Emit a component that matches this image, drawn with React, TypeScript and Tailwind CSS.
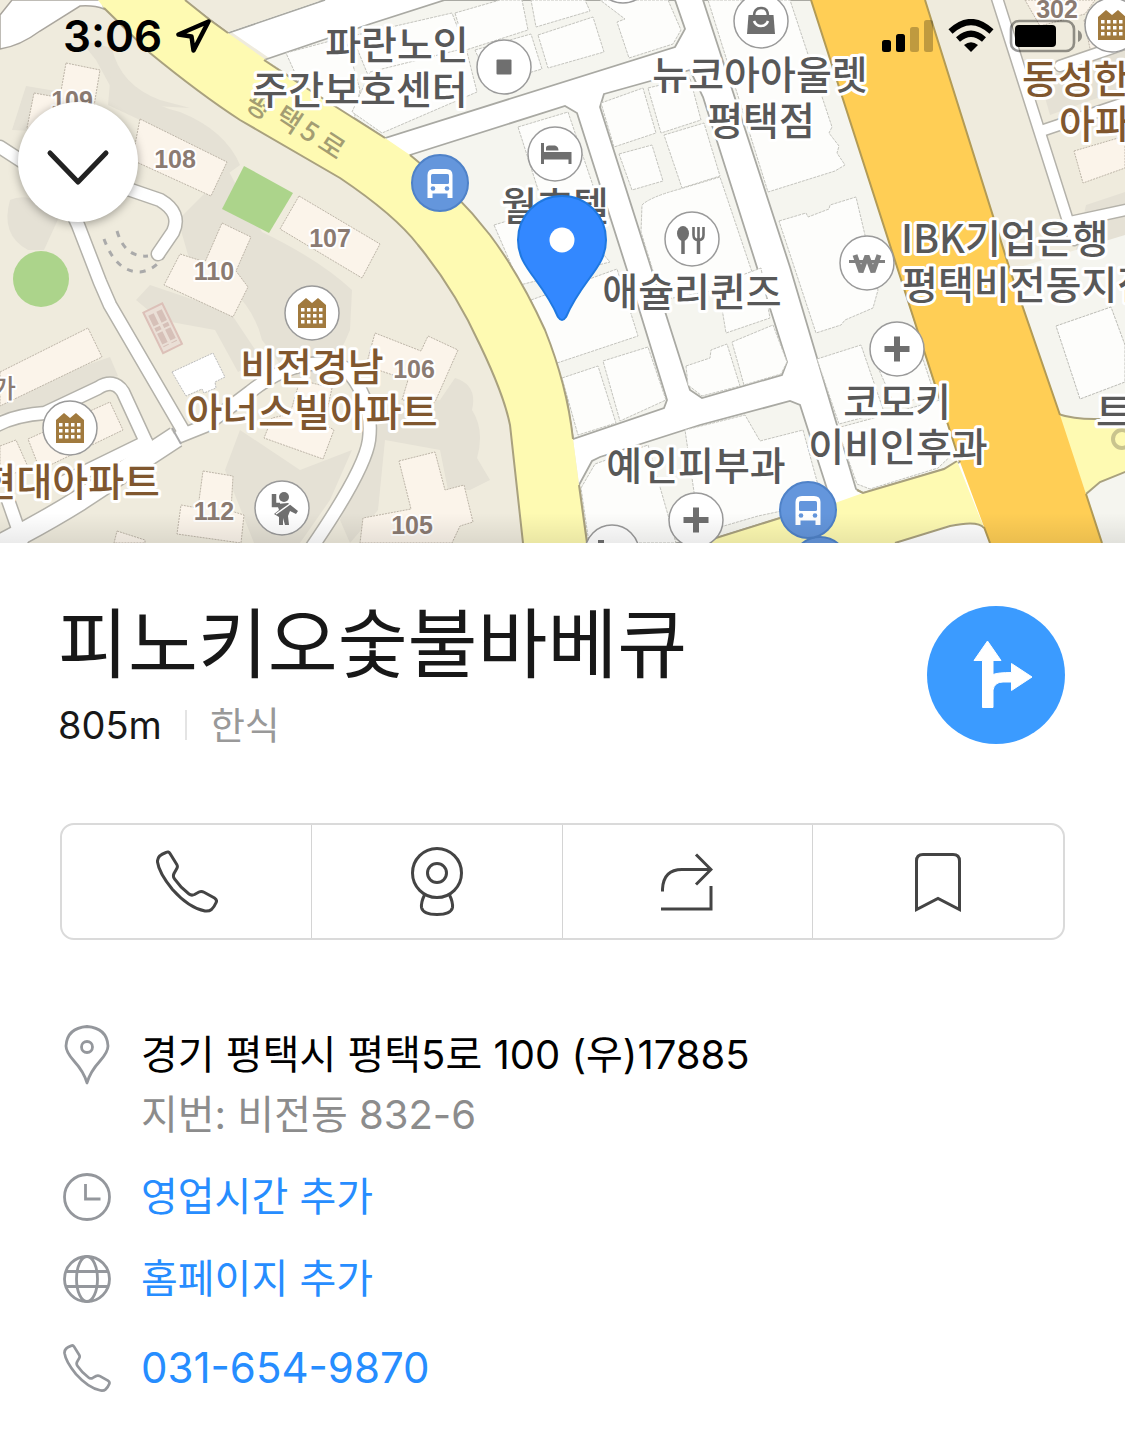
import type { ReactNode } from "react";

type Label = { text: string; x: number; y: number; anchor?: "start" | "middle" | "end"; brown?: boolean };

const placeLabels: Label[] = [
  { text: "파란노인", x: 397, y: 59 },
  { text: "주간보호센터", x: 360, y: 104 },
  { text: "뉴코아아울렛", x: 760, y: 89 },
  { text: "평택점", x: 761, y: 135 },
  { text: "월호텔", x: 555, y: 220 },
  { text: "애슐리퀸즈", x: 692, y: 306 },
  { text: "IBK기업은행", x: 901, y: 253, anchor: "start" },
  { text: "평택비전동지점", x: 902, y: 299, anchor: "start" },
  { text: "코모키", x: 897, y: 416 },
  { text: "이비인후과", x: 898, y: 461 },
  { text: "예인피부과", x: 696, y: 480 },
  { text: "트", x: 1096, y: 426, anchor: "start" },
  { text: "동성한", x: 1022, y: 93, anchor: "start", brown: true },
  { text: "아파", x: 1059, y: 138, anchor: "start", brown: true },
  { text: "비전경남", x: 312, y: 381, brown: true },
  { text: "아너스빌아파트", x: 312, y: 426, brown: true },
  { text: "현대아파트", x: 160, y: 496, anchor: "end", brown: true },
];

const buildingNumbers = [
  { text: "109", x: 72, y: 109 },
  { text: "108", x: 175, y: 168 },
  { text: "107", x: 330, y: 247 },
  { text: "110", x: 214, y: 280 },
  { text: "106", x: 414, y: 378 },
  { text: "112", x: 214, y: 520 },
  { text: "105", x: 412, y: 534 },
  { text: "302", x: 1057, y: 18 },
];

const roadName = [
  { text: "평", x: 260, y: 104, angle: 33 },
  { text: "택", x: 290, y: 118, angle: 33 },
  { text: "5", x: 311, y: 130, angle: 33 },
  { text: "로", x: 333, y: 144, angle: 33 },
];

// darker ground inside the apartment complexes
const groundShades = [
  "M80 40 L112 48 Q120 85 160 100 L190 108 L120 104 L96 60Z",
  "M112 60 Q130 100 180 112 Q225 130 240 165 L222 178 Q190 140 140 120 L108 105Z",
  "M26 86 L62 92 L58 110 L120 120 L118 135 L12 130Z",
  "M10 200 Q30 190 60 215 L44 250 H28 Q0 235 10 200Z",
  "M228 170 L262 232 Q320 260 352 290 L350 330 Q330 380 300 390 L262 340 Q250 290 190 262 L178 220Z",
  "M150 285 L230 312 L262 360 L238 372 L215 330 L160 320 L136 300Z",
  "M240 430 L300 470 L352 450 L330 500 L300 543 L254 543 L225 470Z",
  "M455 378 Q478 385 472 410 Q485 430 477 458 L490 480 L470 490 L448 490 L440 450 L385 440 L378 510 L350 543 L340 520 L385 405 L440 400Z",
  "M0 395 L110 357 L118 376 L40 408 L0 414Z",
  "M1040 80 L1125 45 V88 L1050 115Z",
  "M1086 205 L1125 192 V240 L1076 250Z",
];

const apartments = [
  "M66 63 L100 70 L93 112 L58 108Z",
  "M34 93 L62 98 L52 135 L27 128Z",
  "M140 119 L227 162 L211 196 L132 160Z",
  "M299 196 L380 244 L362 278 L280 229Z",
  "M222 223 L251 237 L236 271 L248 287 L233 317 L164 285 L180 254 L205 262Z",
  "M375 333 L421 351 L428 336 L458 350 L435 402 L402 400 L408 380 L366 366Z",
  "M300 380 L332 388 L324 424 L334 430 L323 459 L264 438 L272 418 L290 414Z",
  "M399 461 L435 452 L445 490 L464 485 L473 522 L460 526 L452 543 L360 543 L363 518 L411 509Z",
  "M203 471 L233 476 L231 511 L244 515 L241 543 L177 534 L181 505 L198 508Z",
  "M0 372 L88 328 L102 357 L0 406Z",
  "M28 439 L110 402 L123 430 L40 470Z",
  "M0 446 L16 440 L28 467 L0 480Z",
  "M117 531 L145 540 V543 H114Z",
  "M1025 0 H1095 L1085 14 L1040 26Z",
  "M1074 151 L1125 136 V168 L1083 183Z",
  "M1084 20 L1125 10 V50 L1092 58Z",
];

// city blocks between the side streets
const blocks = [
  "M185 0 H325 L228 33Z",
  "M264 60 L370 24 L445 0 H675 L685 29 L675 47 L385 138 Z",
  "M410 155 L565 106 L577 113 L627 270 L667 400 L664 408 L573 439 L567 400 L545 330 L508 265 L460 202Z",
  "M604 94 L690 70 L703 97 L787 362 L782 375 L702 398 L690 390 L600 107Z",
  "M703 0 H812 L960 462 L944 469 L863 493 L856 489 L790 267Z",
  "M579 485 L592 461 L600 457 L700 425 L790 401 L800 405 L828 492 L780 518 L700 543 H587Z",
];

const parcels = [
  "M286 53 L345 37 L360 90 L352 130 L300 84Z",
  "M352 36 L452 13 L467 52 L370 80Z",
  "M455 13 L500 0 H522 L528 30 L466 50Z",
  "M531 0 H585 L590 11 L536 27Z",
  "M538 35 L593 17 L604 52 L548 68Z",
  "M475 50 L531 34 L542 69 L490 84Z",
  "M600 0 H668 L681 30 L673 44 L629 58 L617 22 L625 19Z",
  "M370 72 L466 48 L477 92 L382 133 L352 112Z",
  "M518 127 L568 112 L603 215 L551 230Z",
  "M494 225 L560 205 L610 262 L520 285Z",
  "M531 300 L617 269 L638 336 L557 363Z",
  "M562 378 L598 366 L616 423 L578 435Z",
  "M603 361 L648 347 L666 400 L620 421Z",
  "M601 103 L643 88 L656 133 L614 147Z",
  "M648 88 L690 78 L701 120 L661 133Z",
  "M619 154 L652 145 L663 181 L632 190Z",
  "M664 135 L704 123 L720 176 L682 188Z",
  "M642 205 Q650 197 680 189 L720 177 L752 272 L744 285 L662 300 L641 232Z",
  "M718 284 L761 268 L770 318 L726 333Z",
  "M686 366 L710 358 L711 350 L727 344 L740 386 L702 396 L688 385Z",
  "M732 342 L773 325 L787 362 L781 374 L744 385Z",
  "M720 0 H790 L832 127 L829 133 L839 146 L837 153 L845 165 L835 171 L768 192 L708 0Z",
  "M779 221 L806 213 L808 217 L829 209 L830 205 L856 197 L878 290 L873 308 L845 320 L841 325 L816 333Z",
  "M817 359 L861 345 L884 412 L839 424Z",
  "M876 363 L920 350 L934 393 L895 406Z",
  "M837 428 L896 412 L940 400 L957 450 L938 468 L870 489 L857 484Z",
  "M581 488 L595 464 L648 445 L676 543 H589Z",
  "M685 430 L745 415 L760 441 L803 430 L818 485 L810 505 L758 516 L700 533Z",
];

function RoundMarker({ x, y, children }: { x: number; y: number; children?: ReactNode }) {
  return (
    <g transform={`translate(${x} ${y})`}>
      <circle r="27" fill="#fff" stroke="#9a9a9a" strokeWidth="1.5" />
      {children}
    </g>
  );
}

function ApartmentMarker({ x, y }: { x: number; y: number }) {
  return (
    <RoundMarker x={x} y={y}>
      <path d="M-14 -8 L-6 -15 L0 -10 L6 -15 L14 -8 V15 H-14Z" fill="#a17a3e" />
      {[-5, 1, 7].map((wy) =>
        [-11, -5, 1, 7].map((wx) => <rect key={`${wx}${wy}`} x={wx} y={wy} width="3.5" height="3.5" fill="#fff" />)
      )}
    </RoundMarker>
  );
}

function HospitalMarker({ x, y }: { x: number; y: number }) {
  return (
    <RoundMarker x={x} y={y}>
      <path d="M-3 -12.5 H3 V-3 H12.5 V3 H3 V12.5 H-3 V3 H-12.5 V-3 H-3Z" fill="#6f6f6f" />
    </RoundMarker>
  );
}

function BusStop({ x, y }: { x: number; y: number }) {
  return (
    <g transform={`translate(${x} ${y})`}>
      <circle r="28" fill="#6496dc" stroke="#4f82c8" strokeWidth="2" />
      <path d="M-12.5 -8 Q-12.5 -14 -6 -14 H6 Q12.5 -14 12.5 -8 V15 H7.5 V10.5 H-7.5 V15 H-12.5Z" fill="#fff" />
      <rect x="-9" y="-9" width="18" height="10" rx="1.5" fill="#6496dc" />
      <circle cx="-7" cy="5.5" r="2.3" fill="#6496dc" />
      <circle cx="7" cy="5.5" r="2.3" fill="#6496dc" />
    </g>
  );
}

function MapView() {
  const complexRoads = [
    "M0 147 L60 186 L78 225 L100 282 L110 305 L184 432",
    "M125 188 L160 200 Q182 213 173 232 L158 254",
    "M-5 426 Q15 415 45 413 L98 388 Q114 378 123 392 L146 442",
    "M60 484 L146 442",
    "M180 436 L205 426 L250 392 Q300 352 345 368 Q374 400 369 440 Q365 470 310 550",
    "M8 500 L22 540",
  ];
  const eastRoads = ["M996 -5 L1074 240", "M1044 130 L1130 101", "M1060 66 L1130 42", "M1070 222 L1130 209"];

  return (
    <svg viewBox="0 0 1125 543" className="block w-full" role="img" aria-label="지도">
      <defs>
        <linearGradient id="sheetShade" x1="0" y1="0" x2="0" y2="1">
          <stop offset="0" stopColor="#000" stopOpacity="0" />
          <stop offset="1" stopColor="#000" stopOpacity="0.08" />
        </linearGradient>
      </defs>
      <rect width="1125" height="543" fill="#efebdd" />

      <g fill="#e5e1d5">
        {groundShades.map((d) => (
          <path key={d} d={d} />
        ))}
      </g>
      <g fill="#fbf4ea" stroke="#bdb5a8" strokeWidth="1" strokeDasharray="2 1">
        {apartments.map((d) => (
          <path key={d} d={d} />
        ))}
      </g>

      <path d="M172 372 L213 353 L225 377 L215 382 L216 388 L204 393 L202 389 L186 396Z" fill="#fff" stroke="#bbb" strokeDasharray="2 1" />
      <g transform="rotate(-26 162 328)">
        <rect x="152" y="306" width="21" height="45" fill="#eadfd6" stroke="#dcc0b8" strokeWidth="2" />
        <path d="M158 311 V346 M167 311 V346" stroke="#d6c0b8" strokeWidth="6" strokeDasharray="12 2 4 2" />
      </g>
      <path d="M104 239 Q116 272 140 272 Q155 270 164 256" fill="none" stroke="#aaa" strokeWidth="3" strokeDasharray="6 7" />
      <path d="M117 231 Q125 258 148 256" fill="none" stroke="#aaa" strokeWidth="3" strokeDasharray="6 7" />
      <circle cx="41" cy="279" r="28" fill="#acd48b" />
      <path d="M244 166 L293 193 L269 233 L222 209Z" fill="#acd48b" />

      <g fill="none" stroke="#b4b2aa" strokeWidth="15" strokeLinecap="round" strokeLinejoin="round">
        {complexRoads.map((d) => (
          <path key={d} d={d} />
        ))}
        {eastRoads.map((d) => (
          <path key={d} d={d} strokeWidth="13" />
        ))}
        <path d="M176 437 L80 500 Q40 525 -10 550" strokeWidth="23" strokeLinecap="butt" />
      </g>
      <g fill="none" stroke="#fff" strokeWidth="12" strokeLinecap="round" strokeLinejoin="round">
        {complexRoads.map((d) => (
          <path key={d} d={d} />
        ))}
        {eastRoads.map((d) => (
          <path key={d} d={d} strokeWidth="10" />
        ))}
        <path d="M176 437 L80 500 Q40 525 -10 550" strokeWidth="20" strokeLinecap="butt" />
      </g>
      <path d="M172 428 L181 444" stroke="#aaa" strokeWidth="2" />

      <path d="M12 0 H102 L104 9 Q94 5 80 6 L40 31 Q20 46 0 49 V15Z" fill="#fff" stroke="#aaa69e" strokeWidth="1.5" />

      {/* downtown grid */}
      <path d="M185 0 H812 L990 543 H587 L573 439 L508 265 L385 138Z" fill="#fff" />
      <g fill="#f5f5ef" stroke="#a9a9a3" strokeWidth="1.8">
        {blocks.map((d) => (
          <path key={d} d={d} />
        ))}
      </g>
      <g fill="#fdfdfb" stroke="#c4c4be" strokeWidth="1" strokeDasharray="3 1">
        {parcels.map((d) => (
          <path key={d} d={d} />
        ))}
      </g>
      <path d="M185 0 H322 L228 32Z" fill="#efebdd" />

      <path d="M1010 270 L1125 235 V543 H1100Z" fill="#f5f5ef" />
      <path d="M1056 326 L1111 307 L1125 345 V382 L1080 399Z" fill="#fdfdfb" stroke="#bcbcb6" strokeDasharray="3 1" />

      {/* main roads */}
      <path
        d="M98 0 L104 8 L150 53 Q200 94 240 120 L340 178 Q395 215 418 245 Q455 290 480 345 Q504 395 510 425 Q516 480 523 543 H587 L579 485 L573 439 Q567 385 545 330 Q520 275 490 235 Q455 190 410 155 L385 138 L300 84 L228 33 L210 20 L185 0Z"
        fill="#fefab2"
      />
      <path
        d="M104 8 L150 53 Q200 94 240 120 L340 178 Q395 215 418 245 Q455 290 480 345 Q504 395 510 425 Q516 480 523 543"
        fill="none"
        stroke="#a9a17e"
        strokeWidth="2"
      />
      <path
        d="M185 0 L210 20 L228 33 M264 60 L300 84 L385 138 M410 155 Q455 190 490 235 Q520 275 545 330 Q567 385 573 439 M579 485 L587 543"
        fill="none"
        stroke="#a9a17e"
        strokeWidth="2"
      />
      <path d="M700 543 L780 518 L835 503 L863 493 L944 469 L957 461 L985 530 Q978 520 950 525 L895 543Z" fill="#fefab2" />
      <path d="M700 543 L780 518 M857 490 L863 493 L944 469 L957 461 M895 543 L950 526 Q978 520 984 528" fill="none" stroke="#a9a17e" strokeWidth="2" />
      <path d="M1058 414 Q1085 423 1130 416 V470 L1100 482 L1086 494Z" fill="#fefab2" />
      <path d="M1058 414 Q1085 423 1130 416 M1130 470 L1100 482 L1086 494" fill="none" stroke="#a9a17e" strokeWidth="2" />
      <path d="M811 0 H925 L1010 270 L1060 415 L1086 494 L1102 543 H990 L960 462 L898 270Z" fill="#ffce55" />
      <path d="M811 0 L898 270 L960 462 M984 527 L990 543 M925 0 L1010 270 L1060 415 M1086 494 L1102 543" fill="none" stroke="#b39b55" strokeWidth="2" />

      {roadName.map((c) => (
        <text
          key={c.text}
          transform={`translate(${c.x} ${c.y}) rotate(${c.angle})`}
          textAnchor="middle"
          dominantBaseline="central"
          fontSize="27"
          fontWeight="500"
          fill="#a39d72"
          className="font-['Noto_Sans_CJK_KR',sans-serif]"
        >
          {c.text}
        </text>
      ))}

      <g textAnchor="middle" fill="#8b7b72" stroke="#fff" strokeWidth="4" strokeLinejoin="round" paintOrder="stroke" className="font-['Liberation_Sans','Noto_Sans_CJK_KR',sans-serif]">
        {buildingNumbers.map((n) => (
          <text key={n.text} x={n.x} y={n.y} fontSize="25" fontWeight="700">
            {n.text}
          </text>
        ))}
        <text x="4" y="398" fontSize="26" fontWeight="500">
          가
        </text>
      </g>
      <circle cx="1122" cy="439" r="9" fill="none" stroke="#c9c48e" strokeWidth="4" />

      <g fontSize="39" fontWeight="500" stroke="#fff" strokeWidth="6" strokeLinejoin="round" paintOrder="stroke" className="font-['Noto_Sans_CJK_KR',sans-serif]">
        {placeLabels.map((l) => (
          <text key={l.text} x={l.x} y={l.y} textAnchor={l.anchor ?? "middle"} fill={l.brown ? "#80572f" : "#585858"}>
            {l.text}
          </text>
        ))}
      </g>

      <RoundMarker x={504} y={67}>
        <rect x="-7.5" y="-7.5" width="15" height="15" rx="1" fill="#6f6f6f" />
      </RoundMarker>
      <RoundMarker x={623} y={-24} />
      <RoundMarker x={555} y={154}>
        <path d="M-14 -11 H-11 V-2 H16.5 V10 H13.5 V5.5 H-11 V10 H-14Z M-9 -3.5 V-6 Q-9 -8.500 -6 -8.500 H0 Q3.5 -7.5 3.5 -3.5Z" fill="#6f6f6f" />
      </RoundMarker>
      <RoundMarker x={692} y={239}>
        <ellipse cx="-9" cy="-5.5" rx="6" ry="7.5" fill="#6f6f6f" />
        <path d="M-9 0 V15 M6.5 0 V15" stroke="#6f6f6f" strokeWidth="3.5" />
        <path d="M1.5 -12 V-4 Q1.5 1 6.5 1 Q11.5 1 11.5 -4 V-12 M6.5 -12 V0" fill="none" stroke="#6f6f6f" strokeWidth="2.6" />
      </RoundMarker>
      <RoundMarker x={867} y={263}>
        <path d="M-12 -8 L-6 9 L0 -7 L6 9 L12 -8" fill="none" stroke="#808080" strokeWidth="5" strokeLinejoin="bevel" />
        <path d="M-18 -1.500 H18" stroke="#808080" strokeWidth="3" />
      </RoundMarker>
      <RoundMarker x={761} y={21}>
        <path d="M-12.5 -6 H12.5 L14 13 H-14Z" fill="#6f6f6f" />
        <path d="M-7 -5 Q-7 -13 0 -13 Q7 -13 7 -5" fill="none" stroke="#6f6f6f" strokeWidth="2.6" />
        <path d="M-7 0 Q-5 5 0 5 Q5 5 7 0" fill="none" stroke="#fff" strokeWidth="2.6" />
      </RoundMarker>
      <HospitalMarker x={897} y={349} />
      <HospitalMarker x={696} y={520} />
      <RoundMarker x={612} y={552}>
        <path d="M-14 -12 H-8 V-3 H-14Z" fill="#6f6f6f" />
      </RoundMarker>
      <ApartmentMarker x={312} y={313} />
      <ApartmentMarker x={70} y={428} />
      <ApartmentMarker x={1112} y={25} />
      <RoundMarker x={282} y={508}>
        <circle cx="2" cy="-11" r="5" fill="#6f6f6f" />
        <path d="M-8 -14 V-3 H-2" fill="none" stroke="#6f6f6f" strokeWidth="4.5" />
        <path d="M-5 -4 L6 -5 L16 3 L14 6 L8 3 L6 8 L7 17 H3 L1 10 L1 17 H-3 L-3 9 L-8 6 L-3 2Z" fill="#6f6f6f" />
        <path d="M-6 6 L8 -4" stroke="#fff" strokeWidth="1.5" />
      </RoundMarker>
      <BusStop x={440} y={183} />
      <BusStop x={820} y={565} />
      <BusStop x={808} y={510} />

      <path
        d="M562 196 C587 196 606 216 606 240 C606 268 583 278 566 317 Q562 323 558 317 C541 278 518 268 518 240 C518 216 537 196 562 196Z"
        fill="#3388ff"
        stroke="#1f78e0"
        strokeWidth="2"
      />
      <circle cx="562" cy="240" r="12.5" fill="#fff" />

      <rect y="513" width="1125" height="30" fill="url(#sheetShade)" />
    </svg>
  );
}

function StatusBar() {
  return (
    <div className="absolute inset-x-0 top-0 flex items-center justify-between pt-3 pr-[42px] pl-[63px] text-black">
      <div className="flex items-center gap-[14px]">
        <span className="text-[44px] leading-[48px] font-semibold">3:06</span>
        <svg width="36" height="36" viewBox="0 0 36 36" fill="none" stroke="currentColor" strokeWidth="4.5" strokeLinejoin="round">
          <path d="M32.5 3.5 L2.5 16.5 L15.5 18.5 L17.5 32.5Z" />
        </svg>
      </div>
      <div className="flex items-center gap-[15px]">
        <svg width="51" height="34" viewBox="0 0 51 34" fill="currentColor">
          <rect x="0" y="21" width="9" height="12" rx="2.5" />
          <rect x="14" y="15" width="9" height="18" rx="2.5" />
          <rect x="28" y="8" width="9" height="25" rx="2.5" opacity="0.25" />
          <rect x="42" y="1" width="9" height="32" rx="2.5" opacity="0.25" />
        </svg>
        <svg width="46" height="34" viewBox="0 0 46 34" fill="none" stroke="currentColor" strokeWidth="6">
          <path d="M2.5 12.5 Q23 -6.5 43.5 12.5" />
          <path d="M10 20.5 Q23 9 36 20.5" />
          <path d="M23 33 L16 26 Q23 20.5 30 26Z" fill="currentColor" stroke="none" />
        </svg>
        <svg width="74" height="34" viewBox="0 0 74 34">
          <rect x="2" y="2" width="63" height="30" rx="8" fill="none" stroke="#000" strokeOpacity="0.4" strokeWidth="2.6" />
          <rect x="6" y="6" width="41" height="22" rx="4" />
          <path d="M69 11 Q73 13 73 17 Q73 21 69 23Z" opacity="0.4" />
        </svg>
      </div>
    </div>
  );
}

const handset =
  "M10 2.5 Q12.5 1 14 3.5 L20.8 14.5 Q22 16.5 20.8 18.5 L18 23.5 Q16.6 26.5 18.5 28.8 Q24.5 37.5 33 44 Q35.5 46 38.5 44.5 L43 42 Q45.5 40.8 48 42.2 L58.5 48 Q61.5 50 60 52.8 Q58.5 56.5 55.5 59.5 Q53 61.5 49 61 Q33 58 16.5 39.5 Q3 23 1.5 12 Q1 5.5 10 2.5Z";

const actions = [
  {
    label: "전화",
    icon: (
      <svg width="62" height="63" viewBox="0 0 62 63">
        <path d={handset} />
      </svg>
    ),
  },
  {
    label: "로드뷰",
    icon: (
      <svg width="52" height="70" viewBox="0 0 52 70">
        <circle cx="26" cy="26" r="24.5" />
        <circle cx="26" cy="26" r="9.5" />
        <path d="M13.5 48 Q10 55 10.5 60.5 Q12 67.5 26 67.5 Q40 67.5 41.5 60.5 Q42 55 38.5 48" />
      </svg>
    ),
  },
  {
    label: "공유",
    icon: (
      <svg width="52" height="58" viewBox="0 0 52 58">
        <path d="M1.5 38.5 V36 Q2.5 16.5 21 16.5 H49" />
        <path d="M35 1.5 L50 16.5 L35 31.5" />
        <path d="M0 56 H50 V33" />
      </svg>
    ),
  },
  {
    label: "저장",
    icon: (
      <svg width="50" height="60" viewBox="0 0 50 60">
        <path d="M3.5 57.5 V9 Q3.5 2.5 10 2.5 H40 Q46.5 2.5 46.5 9 V57.5 L25 46.5Z" />
      </svg>
    ),
  },
];

function InfoRow({ icon, children }: { icon: ReactNode; children: ReactNode }) {
  return (
    <li className="flex items-start gap-[27px]">
      <span className="flex h-[60px] w-[54px] shrink-0 items-center justify-center text-[#94979c]">{icon}</span>
      <div className="text-[40px] leading-[60px]">{children}</div>
    </li>
  );
}

export default function App() {
  return (
    <main className="min-h-screen bg-white font-['Inter','Noto_Sans_CJK_KR',sans-serif] text-[#181818]">
      <header className="relative">
        <MapView />
        <StatusBar />
        <button
          aria-label="닫기"
          className="absolute top-[102px] left-[18px] flex size-[120px] items-center justify-center rounded-full bg-white shadow-[0_2px_10px_rgba(0,0,0,0.35)]"
        >
          <svg width="64" height="40" viewBox="0 0 64 40" fill="none" stroke="#222" strokeWidth="5" strokeLinecap="round" strokeLinejoin="round" className="mt-3">
            <path d="M4 5 L32 34 L60 5" />
          </svg>
        </button>
      </header>

      <section className="px-[60px] pt-[63px]">
        <div className="flex items-start justify-between">
          <div className="-ml-[2px]">
            <h1 className="text-[76px] leading-[76px]">피노키오숯불바베큐</h1>
            <p className="mt-3 flex items-center text-[38px] leading-[62px]">
              <span>805m</span>
              <span className="mx-[23px] h-[30px] w-[2px] bg-[#e4e4e4]" />
              <span className="text-[#999]">한식</span>
            </p>
          </div>
          <button aria-label="길찾기" className="size-[138px] shrink-0 rounded-full bg-[#3b9bff]">
            <svg viewBox="0 0 138 138" fill="#fff" stroke="#fff" strokeLinejoin="round">
              <path d="M60.5 35 L74 54.5 H66 V68.5 Q71 66.5 84.5 66.5 V57.5 L105 71 L84.5 84.5 V76 H76 Q67.5 76 66 84 V101.5 H55.5 V54.5 H47Z" />
            </svg>
          </button>
        </div>

        <div className="mt-[67px] grid h-[117px] grid-cols-4 divide-x divide-[#d4d4d4] rounded-[14px] border-2 border-[#dadada]">
          {actions.map((a) => (
            <button key={a.label} aria-label={a.label} className="flex items-center justify-center fill-none stroke-[#444] stroke-3">
              {a.icon}
            </button>
          ))}
        </div>

        <ul className="flex flex-col gap-[22px] pt-[85px] pb-[52px]">
          <InfoRow
            icon={
              <svg width="46" height="60" viewBox="0 0 46 60" fill="none" stroke="currentColor" strokeWidth="2.8" strokeLinejoin="round">
                <path d="M23 58 Q20 47 10 36 Q2 27 2 21 Q3 3 23 1.5 Q43 3 44 21 Q44 27 36 36 Q26 47 23 58Z" />
                <circle cx="23" cy="22" r="5.5" />
              </svg>
            }
          >
            <p className="text-black">경기 평택시 평택5로 100 (우)17885</p>
            <p className="text-[#8c8c8c]">지번: 비전동 832-6</p>
          </InfoRow>
          <InfoRow
            icon={
              <svg width="48" height="48" viewBox="0 0 48 48" fill="none" stroke="currentColor" strokeWidth="2.8">
                <circle cx="24" cy="24" r="22.5" />
                <path d="M22.5 11 V26 H37.5" />
              </svg>
            }
          >
            <a href="#hours" className="text-[#268dff]">
              영업시간 추가
            </a>
          </InfoRow>
          <InfoRow
            icon={
              <svg width="48" height="48" viewBox="0 0 48 48" fill="none" stroke="currentColor" strokeWidth="2.8">
                <circle cx="24" cy="24" r="22.5" />
                <ellipse cx="24" cy="24" rx="10.5" ry="22.5" />
                <path d="M3 16.5 H45 M3 31.5 H45" />
              </svg>
            }
          >
            <a href="#homepage" className="text-[#268dff]">
              홈페이지 추가
            </a>
          </InfoRow>
          <li className="flex items-start gap-[27px] pt-[7px]">
            <span className="flex h-[60px] w-[54px] shrink-0 items-center justify-center text-[#94979c]">
              <svg width="48" height="48" viewBox="0 0 62 63" fill="none" stroke="currentColor" strokeWidth="3.6">
                <path d={handset} />
              </svg>
            </span>
            <a href="tel:031-654-9870" className="text-[42px] leading-[60px] text-[#268dff]">
              031-654-9870
            </a>
          </li>
        </ul>
      </section>
    </main>
  );
}
